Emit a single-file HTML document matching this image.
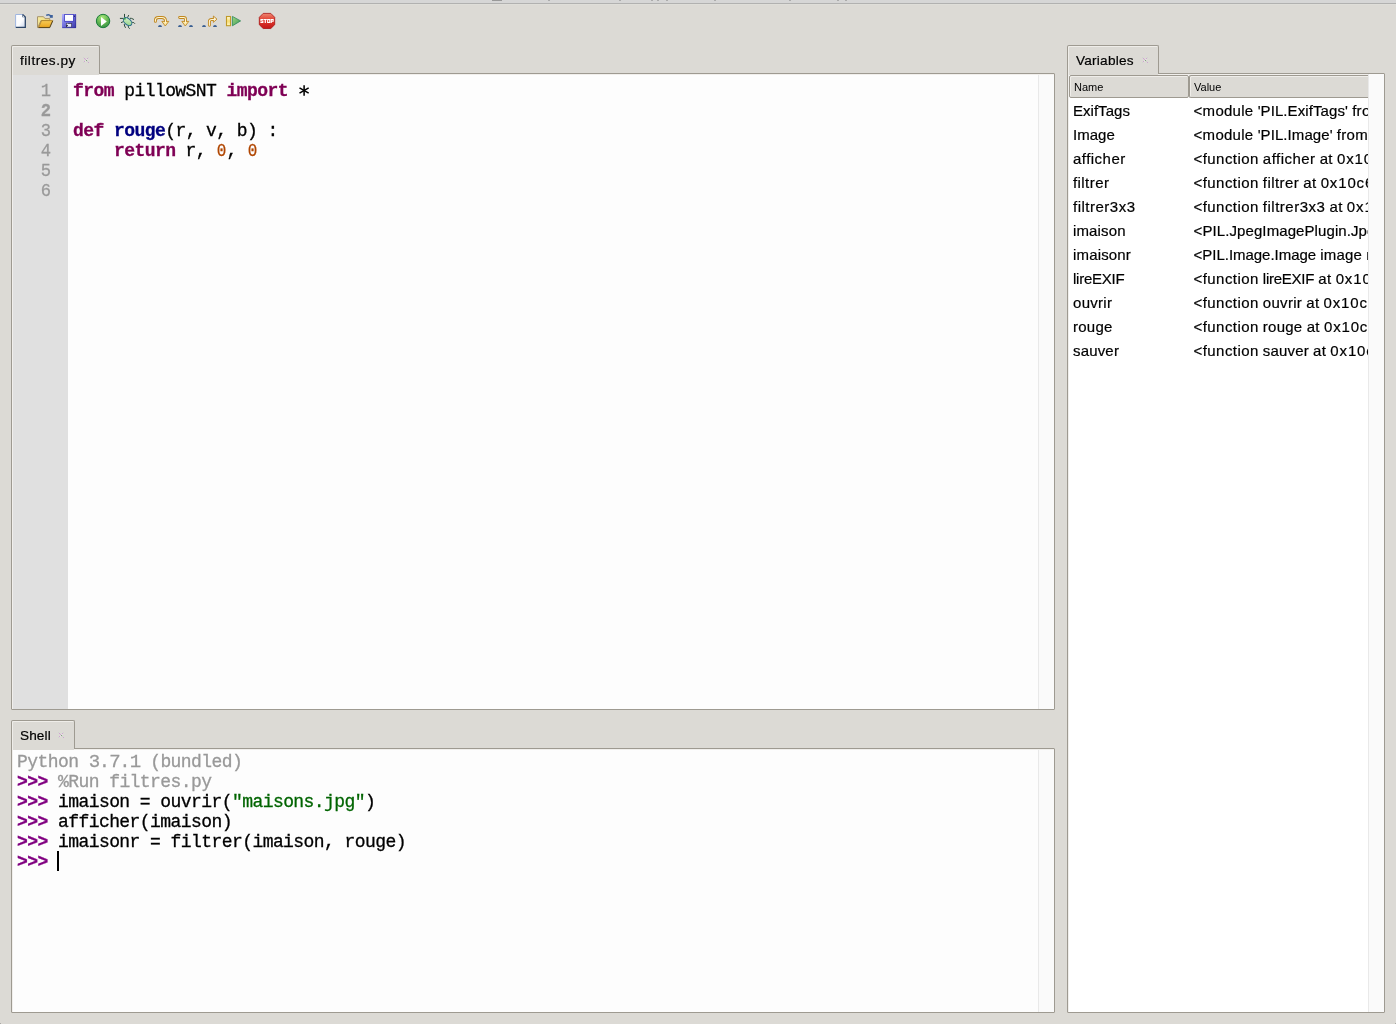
<!DOCTYPE html>
<html>
<head>
<meta charset="utf-8">
<title>Thonny</title>
<style>
*{box-sizing:border-box;margin:0;padding:0}
html,body{width:1396px;height:1024px;overflow:hidden;background:#dcdad5;}
body{position:relative;font-family:"Liberation Sans",sans-serif;color:#000;}
.abs{position:absolute}
#topstrip{left:0;top:0;width:1396px;height:3px;background:#d6d6d6}
#topline{left:0;top:3px;width:1396px;height:1px;background:#b1b1b0}
/* notebook panes */
.pane{position:absolute;border:1px solid #9e9a91;background:#dcdad5;border-radius:1px;box-shadow:inset 1px 1px 0 #f1efec}
.tab::after{content:"";position:absolute;left:0;right:0;bottom:-1px;height:1px;background:linear-gradient(to right,#efede9 1px,#dcdad5 1px)}
.tab{position:absolute;height:29px;border:1px solid #9e9a91;border-bottom:none;background:#dcdad5;border-radius:2px 2px 0 0;font-size:13.6px;line-height:15px;box-shadow:inset 1px 1px 0 #efede9}
.tab span.t{position:absolute;left:8px;top:7px;white-space:nowrap}
.tab span.x{position:absolute;top:7px;font-size:11px;color:#c9b6cf}
/* editor */
.mono{font-family:"Liberation Mono",monospace;font-size:18px;line-height:20px;white-space:pre;letter-spacing:-0.567px;-webkit-text-stroke:0.3px}
#gutter{left:13px;top:75px;width:55px;height:634px;background:#e0e0e0}
#edtext{left:68px;top:75px;width:970px;height:634px;background:#fdfdfd}
.sbline{background:#e9e9e9;width:1px}
.sb{background:#fafafa}
.ln{position:absolute;left:0;width:50px;text-align:right;color:#999;font-size:19px;letter-spacing:0;transform:scaleX(.9);transform-origin:100% 50%}
.kw{color:#7f0055;font-weight:bold}
.df{color:#00007f;font-weight:bold}
.nm{color:#b04600;font-size:19px;letter-spacing:-1.167px;display:inline-block;transform:scaleX(.84)}
.dg{font-size:19px;letter-spacing:-1.167px}
.st{color:#006400}
.pr{color:#800080;font-weight:bold}
.gr{color:#999}
.cl{position:absolute;left:5px}
/* variables */
.hd{position:absolute;top:75px;height:23px;border:1px solid #9e9a91;border-radius:2px;background:#dcdad5;font-size:11px;line-height:13px;box-shadow:inset 1px 1px 0 #efede9}
.hd span{position:absolute;left:4px;top:5px}
.vr i,.vv i{font-style:normal}
.vr,.vv{-webkit-text-stroke:0.2px}
.tab span.t{-webkit-text-stroke:0.2px}
.vr{position:absolute;left:1073px;font-size:15px;line-height:18px;white-space:nowrap}
.vv{position:absolute;left:1193.6px;font-size:15px;line-height:18px;white-space:nowrap;width:174.4px;overflow:hidden}
</style>
</head>
<body>
<div id="root" style="position:absolute;left:0;top:0;width:1396px;height:1024px;will-change:transform">
<div class="abs" id="topstrip"></div>
<div class="abs" id="topline"></div>
<div class="abs" style="left:0;top:4px;width:1396px;height:1px;background:#dfded9"></div>
<div class="abs" style="left:492px;top:0;width:10px;height:1px;background:#999"></div><div class="abs" style="left:548px;top:0;width:2px;height:1px;background:#9a9a9a;opacity:.7"></div><div class="abs" style="left:619px;top:0;width:2px;height:1px;background:#9a9a9a;opacity:.7"></div><div class="abs" style="left:651px;top:0;width:2px;height:1px;background:#9a9a9a;opacity:.7"></div><div class="abs" style="left:657px;top:0;width:2px;height:1px;background:#9a9a9a;opacity:.7"></div><div class="abs" style="left:666px;top:0;width:2px;height:1px;background:#9a9a9a;opacity:.7"></div><div class="abs" style="left:714px;top:0;width:2px;height:1px;background:#9a9a9a;opacity:.7"></div><div class="abs" style="left:789px;top:0;width:2px;height:1px;background:#9a9a9a;opacity:.7"></div><div class="abs" style="left:837px;top:0;width:2px;height:1px;background:#9a9a9a;opacity:.7"></div><div class="abs" style="left:845px;top:0;width:2px;height:1px;background:#9a9a9a;opacity:.7"></div>

<!-- TOOLBAR -->
<!--TB--><svg class="abs" style="left:0;top:0" width="300" height="40" viewBox="0 0 300 40">
<defs>
<linearGradient id="gPage" x1="0" y1="0" x2="1" y2="1"><stop offset="0" stop-color="#fff"/><stop offset=".55" stop-color="#fbfcff"/><stop offset="1" stop-color="#c4d0e8"/></linearGradient>
<linearGradient id="gFold" x1="0" y1="0" x2="0" y2="1"><stop offset="0" stop-color="#f6cc58"/><stop offset="1" stop-color="#eaa41e"/></linearGradient>
<linearGradient id="gFoldB" x1="0" y1="0" x2="1" y2="1"><stop offset="0" stop-color="#f6eea4"/><stop offset="1" stop-color="#ecca60"/></linearGradient>
<linearGradient id="gSave" x1="0" y1="0" x2="1" y2="1"><stop offset="0" stop-color="#b2b0fc"/><stop offset=".45" stop-color="#7674de"/><stop offset="1" stop-color="#3a38a6"/></linearGradient>
<radialGradient id="gRun" cx=".45" cy=".25" r=".8"><stop offset="0" stop-color="#a8e878"/><stop offset=".6" stop-color="#5cb050"/><stop offset="1" stop-color="#2f8c44"/></radialGradient>
<linearGradient id="gBug" x1="0" y1="0" x2="1" y2="1"><stop offset="0" stop-color="#e4f6dc"/><stop offset="1" stop-color="#88cc78"/></linearGradient>
<linearGradient id="gPipe" x1="0" y1="0" x2="0" y2="1"><stop offset="0" stop-color="#fff8dc"/><stop offset="1" stop-color="#f8d878"/></linearGradient>
<linearGradient id="gPause" x1="0" y1="0" x2="0" y2="1"><stop offset="0" stop-color="#fffce0"/><stop offset=".5" stop-color="#f8dc70"/><stop offset="1" stop-color="#fff8c8"/></linearGradient>
<linearGradient id="gTri" x1="0" y1="0" x2="1" y2="1"><stop offset="0" stop-color="#a0d880"/><stop offset="1" stop-color="#3c9858"/></linearGradient>
<linearGradient id="gStop" x1="0" y1="0" x2="0" y2="1"><stop offset="0" stop-color="#ee8670"/><stop offset=".45" stop-color="#e03c30"/><stop offset="1" stop-color="#c41818"/></linearGradient>
</defs>
<!-- new file -->
<g>
<path d="M15.5 14.5 H22.8 L25.5 17.2 V27.6 H15.5 Z" fill="url(#gPage)"/>
<path d="M15.6 27.4 V14.5 H22.8" fill="none" stroke="#9fb6e0" stroke-width="1"/>
<path d="M22.6 14.4 L25.3 17.1 V27.4 H15.8" fill="none" stroke="#2b4568" stroke-width="1.3"/>
<path d="M22.4 14.6 V17.3 H25.2 Z" fill="#3b5578"/><rect x="23.1" y="15.9" width=".9" height=".9" fill="#fff"/>
</g>
<!-- open folder -->
<g>
<path d="M37.5 27.5 V16.7 H43.5 L45 18.6 H49.8 V20.5 H41 L37.8 27.5 Z" fill="url(#gFoldB)" stroke="#a8946a" stroke-width="1"/>
<path d="M38.6 27.4 L41.6 20.6 H52.6 L49.6 27.4 Z" fill="url(#gFold)" stroke="#b08428" stroke-width=".9"/>
<path d="M38.4 27.6 H49.8 L52.8 20.8" fill="none" stroke="#3a2c10" stroke-width="1" opacity=".75"/>
<path d="M46.2 15.4 Q49 13.8 50.8 16" fill="none" stroke="#3c609c" stroke-width="1.3"/>
<path d="M49.8 15 H52.8 V17.8 H49.8 Z" fill="#3c609c"/>
</g>
<!-- save -->
<g>
<rect x="62" y="14" width="14" height="14" fill="url(#gSave)"/>
<path d="M62.3 27.7 H75.7 V14.3" fill="none" stroke="#2c2a98" stroke-width=".6"/>
<rect x="64.2" y="14" width="9.6" height="7.8" fill="#4a48c4"/>
<rect x="65" y="14.9" width="8" height="6" fill="#fdfdff"/>
<rect x="66" y="23.1" width="5.8" height="4" fill="#30304c"/>
<rect x="67.2" y="23.8" width="4" height="3" fill="#e4e8ff"/><rect x="66.3" y="24.8" width="1.6" height="1.2" fill="#30304c"/>
<rect x="66.6" y="23.6" width="1.2" height="1.2" fill="#fff"/>
<rect x="74" y="15.6" width="1" height="1.2" fill="#1c1c60"/>
</g>
<!-- run -->
<g>
<circle cx="103.05" cy="21" r="6.7" fill="url(#gRun)" stroke="#1c7c3c" stroke-width="1"/>
<path d="M101 16.9 V26.1 L106.8 21.4 Z" fill="#fff"/>
</g>
<!-- debug -->
<g stroke="#2c4c3c" stroke-width="1" stroke-linecap="round" fill="none">
<path d="M124.5 14.3 V17.3"/><path d="M128.6 15.4 L127.4 17.8"/>
<path d="M120.3 18.4 H123.2"/><path d="M130.3 18.3 L131.6 18.4 L133.6 19.4"/>
<path d="M121.4 22.5 L123.5 21.6"/><path d="M132.5 22.4 L133.8 22.6 L134.7 23.5"/>
<path d="M124.3 24.4 L124.6 26 L125.4 27.5"/><path d="M128.3 26.3 L128.5 27.6 L129.5 28.4"/>
<ellipse cx="127.6" cy="21.6" rx="4.9" ry="3.1" transform="rotate(42 127.6 21.6)" fill="url(#gBug)" stroke="#2a6c8c" stroke-width="1"/>
<circle cx="124.8" cy="18.8" r="1" fill="#3c9c4c" stroke="none"/>
</g>
<!-- step over -->
<g fill="none" stroke-linecap="round" stroke-linejoin="round">
<path d="M155.4 21.4 V20.4 Q155.4 17.45 158.6 17.45 H161.8 Q165.5 17.45 165.5 20.8 V22" stroke="#c08820" stroke-width="2.9"/>
<path d="M162.2 21.4 H168.8 L165.5 25.7 Z" fill="#fbe6a4" stroke="#c08820" stroke-width=".9"/>
<path d="M155.4 21.3 V20.4 Q155.4 17.45 158.6 17.45 H161.8 Q165.5 17.45 165.5 20.8 V22.6" stroke="#fff4d0" stroke-width="1.1"/>
</g>
<path d="M158 26.9 Q158.2 25 160 25 Q161.8 25 162 26.9 Z" fill="#3a5f92"/>
<!-- step into -->
<g fill="none" stroke-linecap="round" stroke-linejoin="round">
<path d="M179.6 17.45 H183.8 Q185.5 17.45 185.5 19.2 V22" stroke="#c08820" stroke-width="2.9"/>
<path d="M182.2 21.4 H188.8 L185.5 25.7 Z" fill="#fbe6a4" stroke="#c08820" stroke-width=".9"/>
<path d="M179.7 17.45 H183.8 Q185.5 17.45 185.5 19.2 V22.6" stroke="#fff4d0" stroke-width="1.1"/>
</g>
<path d="M178 26.9 Q178.2 25 180 25 Q181.8 25 182 26.9 Z" fill="#3a5f92"/>
<path d="M189 26.9 Q189.2 25 191 25 Q192.8 25 193 26.9 Z" fill="#3a5f92"/>
<!-- step out -->
<g fill="none" stroke-linecap="round" stroke-linejoin="round">
<path d="M209.4 25.3 V21.6 Q209.4 19.5 211.5 19.5 H212.4" stroke="#c08820" stroke-width="2.9"/>
<path d="M213.4 16.4 V22.3 L216.7 19.4 Z" fill="#fdf2d0" stroke="#c08820" stroke-width=".9"/>
<path d="M209.4 25.2 V21.6 Q209.4 19.5 211.5 19.5 H214" stroke="#fff4d0" stroke-width="1.1"/>
</g>
<path d="M202 26.9 Q202.2 25 204 25 Q205.8 25 206 26.9 Z" fill="#3a5f92"/>
<path d="M213 26.9 Q213.2 25 215 25 Q216.8 25 217 26.9 Z" fill="#3a5f92"/>
<!-- resume -->
<rect x="226.5" y="16.5" width="4" height="9.2" fill="url(#gPause)" stroke="#c09a28" stroke-width="1.1"/>
<path d="M232.4 16.4 V25.8 L240.6 20.9 Z" fill="url(#gTri)" stroke="#2c8858" stroke-width=".8" stroke-linejoin="round"/>
<!-- stop -->
<path d="M263.2 13.4 H270.8 L274.7 17.3 V24.7 L270.8 28.5 H263.2 L259.3 24.7 V17.3 Z" fill="url(#gStop)" stroke="#a81414" stroke-width=".8"/>
<path fill="#fff" fill-rule="evenodd" d="M263.4 19.1 H260.4 V21.4 H262.29999999999995 V21.9 H260.4 V22.9 H263.4 V20.6 H261.5 V20.1 H263.4 Z M263.8 19.1 H266.8 V20.1 H265.90000000000003 V22.9 H264.7 V20.1 H263.8 Z M267.1 19.1 H270.3 V22.9 H267.1 Z M268.20000000000005 20.1 V21.9 H269.20000000000005 V20.1 Z M270.7 19.1 H273.7 V21.7 H271.8 V22.9 H270.7 Z M271.8 20 V20.8 H272.59999999999997 V20 Z"/>
</svg>
<!--/TB-->

<!-- EDITOR NOTEBOOK -->
<div class="pane" style="left:11px;top:73px;width:1044px;height:637px"></div>
<div class="tab" style="left:11px;top:45px;width:89px"><span class="t" style="letter-spacing:.53px">filtres.py</span></div>
<div class="abs" id="gutter"></div>
<div class="abs" id="edtext"></div>
<div class="abs sbline" style="left:1038px;top:75px;height:634px"></div>
<div class="abs sb" style="left:1039px;top:75px;width:15px;height:634px"></div>
<div class="abs mono" id="lnums" style="left:1px;top:81px;width:68px">
<span class="ln" style="top:0">1</span><span class="ln" style="top:20px;font-weight:bold">2</span><span class="ln" style="top:40px">3</span><span class="ln" style="top:60px">4</span><span class="ln" style="top:80px">5</span><span class="ln" style="top:100px">6</span>
</div>
<div class="abs mono" id="code" style="left:68px;top:81px">
<span class="cl" style="top:0"><span class="kw">from</span> pillowSNT <span class="kw">import</span></span>
<span class="cl" style="top:40px"><span class="kw">def</span> <span class="df">rouge</span>(r, v, b) :</span>
<span class="cl" style="top:60px">    <span class="kw">return</span> r, <span class="nm">0</span>, <span class="nm">0</span></span>
</div>

<svg class="abs" style="left:296px;top:82px" width="16" height="16" viewBox="296 82 16 16"><g stroke="#000" stroke-width="1.55" fill="none"><path d="M304.1 85.3V95.7"/><path d="M299.5 87.9L308.7 93.1"/><path d="M308.7 87.9L299.5 93.1"/></g></svg>
<!-- SHELL NOTEBOOK -->
<div class="pane" style="left:11px;top:748px;width:1044px;height:265px"></div>
<div class="tab" style="left:11px;top:720px;width:64px"><span class="t" style="letter-spacing:.12px">Shell</span></div>
<div class="abs" style="left:13px;top:750px;width:1025px;height:262px;background:#fdfdfd"></div>
<div class="abs sbline" style="left:1038px;top:750px;height:262px"></div>
<div class="abs sb" style="left:1039px;top:750px;width:15px;height:262px"></div>
<div class="abs mono" id="shell" style="left:12px;top:752px">
<span class="cl gr" style="top:0">Python <span class="dg">3</span>.<span class="dg">7</span>.<span class="dg">1</span> (bundled)</span>
<span class="cl" style="top:20px"><span class="pr">&gt;&gt;&gt;</span> <span class="gr">%Run filtres.py</span></span>
<span class="cl" style="top:40px"><span class="pr">&gt;&gt;&gt;</span> imaison = ouvrir(<span class="st">"maisons.jpg"</span>)</span>
<span class="cl" style="top:60px"><span class="pr">&gt;&gt;&gt;</span> afficher(imaison)</span>
<span class="cl" style="top:80px"><span class="pr">&gt;&gt;&gt;</span> imaisonr = filtrer(imaison, rouge)</span>
<span class="cl" style="top:100px"><span class="pr">&gt;&gt;&gt;</span> </span>
</div>
<div class="abs" style="left:57px;top:851px;width:2px;height:20px;background:#000"></div>

<!-- VARIABLES NOTEBOOK -->
<div class="pane" style="left:1067px;top:73px;width:318px;height:940px"></div>
<div class="tab" style="left:1067px;top:45px;width:92px"><span class="t" style="letter-spacing:.24px">Variables</span></div>
<div class="abs" style="left:1069px;top:75px;width:299px;height:937px;background:#fff"></div>
<div class="abs sbline" style="left:1368px;top:74px;height:938px"></div>
<div class="abs sb" style="left:1369px;top:74px;width:15px;height:938px"></div>
<div class="hd" style="left:1069px;width:120px"><span>Name</span></div>
<div class="hd" style="left:1189px;width:182px;border-right:none;border-radius:2px 0 0 2px;clip-path:inset(0 3px 0 0)"><span>Value</span></div>
<div id="vars">
<span class="vr" style="top:102px;letter-spacing:0.03px">ExifTags</span><span class="vv" style="top:102px"><i style="letter-spacing:0.27px">&lt;module</i> <i style="letter-spacing:0.09px">'PIL.ExifTags'</i> <i style="letter-spacing:0.3px">from</i> '/Applications</span>
<span class="vr" style="top:126px;letter-spacing:0.03px">Image</span><span class="vv" style="top:126px"><i style="letter-spacing:0.27px">&lt;module</i> <i style="letter-spacing:0.08px">'PIL.Image'</i> <i style="letter-spacing:0.3px">from</i> '/Applications</span>
<span class="vr" style="top:150px;letter-spacing:0.47px">afficher</span><span class="vv" style="top:150px"><i style="letter-spacing:0.42px">&lt;function</i> <i style="letter-spacing:0.47px">afficher</i> <i style="letter-spacing:0.3px">at</i> <i style="letter-spacing:0.85px">0x10c6a8d08&gt;</i></span>
<span class="vr" style="top:174px;letter-spacing:0.43px">filtrer</span><span class="vv" style="top:174px"><i style="letter-spacing:0.42px">&lt;function</i> <i style="letter-spacing:0.43px">filtrer</i> <i style="letter-spacing:0.3px">at</i> <i style="letter-spacing:0.85px">0x10c6a8e18&gt;</i></span>
<span class="vr" style="top:198px;letter-spacing:0.5px">filtrer3x3</span><span class="vv" style="top:198px"><i style="letter-spacing:0.42px">&lt;function</i> <i style="letter-spacing:0.5px">filtrer3x3</i> <i style="letter-spacing:0.3px">at</i> <i style="letter-spacing:0.85px">0x10c6a8ea0&gt;</i></span>
<span class="vr" style="top:222px;letter-spacing:0.14px">imaison</span><span class="vv" style="top:222px"><i style="letter-spacing:0.09px">&lt;PIL.JpegImagePlugin.JpegImageFile</i> image</span>
<span class="vr" style="top:246px;letter-spacing:0.16px">imaisonr</span><span class="vv" style="top:246px"><i style="letter-spacing:-0.03px">&lt;PIL.Image.Image</i> <i style="letter-spacing:0.2px">image</i> mode=RGB size</span>
<span class="vr" style="top:270px;letter-spacing:-0.25px">lireEXIF</span><span class="vv" style="top:270px"><i style="letter-spacing:0.42px">&lt;function</i> <i style="letter-spacing:-0.25px">lireEXIF</i> <i style="letter-spacing:0.3px">at</i> <i style="letter-spacing:0.85px">0x10c6a8c80&gt;</i></span>
<span class="vr" style="top:294px;letter-spacing:0.29px">ouvrir</span><span class="vv" style="top:294px"><i style="letter-spacing:0.42px">&lt;function</i> <i style="letter-spacing:0.29px">ouvrir</i> <i style="letter-spacing:0.3px">at</i> <i style="letter-spacing:0.85px">0x10c6a8bf8&gt;</i></span>
<span class="vr" style="top:318px;letter-spacing:0.25px">rouge</span><span class="vv" style="top:318px"><i style="letter-spacing:0.42px">&lt;function</i> <i style="letter-spacing:0.25px">rouge</i> <i style="letter-spacing:0.3px">at</i> <i style="letter-spacing:0.85px">0x10c6b1048&gt;</i></span>
<span class="vr" style="top:342px;letter-spacing:0.17px">sauver</span><span class="vv" style="top:342px"><i style="letter-spacing:0.42px">&lt;function</i> <i style="letter-spacing:0.17px">sauver</i> <i style="letter-spacing:0.3px">at</i> <i style="letter-spacing:0.85px">0x10c6a8d90&gt;</i></span>
</div>
<svg class="abs" style="left:83px;top:57px" width="6" height="6" viewBox="0 0 6 6" shape-rendering="crispEdges"><rect x="0" y="0" width="1" height="1" fill="#d0d6ce"/><rect x="5" y="0" width="1" height="1" fill="#d0d6ce"/><rect x="0" y="5" width="1" height="1" fill="#d0d6ce"/><rect x="1" y="1" width="1" height="1" fill="#cfa4d3"/><rect x="4" y="1" width="1" height="1" fill="#cfa4d3"/><rect x="2" y="2" width="1" height="1" fill="#cfa4d3"/><rect x="3" y="3" width="1" height="1" fill="#7f9f80"/><rect x="1" y="4" width="1" height="1" fill="#cfa4d3"/><rect x="5" y="5" width="1" height="1" fill="#cfa4d3"/><rect x="4" y="4" width="1" height="1" fill="#ccd4cb"/><rect x="3" y="2" width="1" height="1" fill="#e3e2dd"/><rect x="2" y="3" width="1" height="1" fill="#e3e2dd"/><rect x="4" y="2" width="1" height="1" fill="#e3e2dd"/><rect x="2" y="4" width="1" height="1" fill="#e3e2dd"/></svg>
<svg class="abs" style="left:58px;top:732px" width="6" height="6" viewBox="0 0 6 6" shape-rendering="crispEdges"><rect x="0" y="0" width="1" height="1" fill="#d0d6ce"/><rect x="5" y="0" width="1" height="1" fill="#d0d6ce"/><rect x="0" y="5" width="1" height="1" fill="#d0d6ce"/><rect x="1" y="1" width="1" height="1" fill="#cfa4d3"/><rect x="4" y="1" width="1" height="1" fill="#cfa4d3"/><rect x="2" y="2" width="1" height="1" fill="#cfa4d3"/><rect x="3" y="3" width="1" height="1" fill="#7f9f80"/><rect x="1" y="4" width="1" height="1" fill="#cfa4d3"/><rect x="5" y="5" width="1" height="1" fill="#cfa4d3"/><rect x="4" y="4" width="1" height="1" fill="#ccd4cb"/><rect x="3" y="2" width="1" height="1" fill="#e3e2dd"/><rect x="2" y="3" width="1" height="1" fill="#e3e2dd"/><rect x="4" y="2" width="1" height="1" fill="#e3e2dd"/><rect x="2" y="4" width="1" height="1" fill="#e3e2dd"/></svg>
<svg class="abs" style="left:1142px;top:57px" width="6" height="6" viewBox="0 0 6 6" shape-rendering="crispEdges"><rect x="0" y="0" width="1" height="1" fill="#d0d6ce"/><rect x="5" y="0" width="1" height="1" fill="#d0d6ce"/><rect x="0" y="5" width="1" height="1" fill="#d0d6ce"/><rect x="1" y="1" width="1" height="1" fill="#cfa4d3"/><rect x="4" y="1" width="1" height="1" fill="#cfa4d3"/><rect x="2" y="2" width="1" height="1" fill="#cfa4d3"/><rect x="3" y="3" width="1" height="1" fill="#7f9f80"/><rect x="1" y="4" width="1" height="1" fill="#cfa4d3"/><rect x="5" y="5" width="1" height="1" fill="#cfa4d3"/><rect x="4" y="4" width="1" height="1" fill="#ccd4cb"/><rect x="3" y="2" width="1" height="1" fill="#e3e2dd"/><rect x="2" y="3" width="1" height="1" fill="#e3e2dd"/><rect x="4" y="2" width="1" height="1" fill="#e3e2dd"/><rect x="2" y="4" width="1" height="1" fill="#e3e2dd"/></svg>
<div class="abs" style="left:0;top:1023px;width:1px;height:1px;background:#a9a8a4"></div><div class="abs" style="left:1395px;top:1023px;width:1px;height:1px;background:#a9a8a4"></div>
</div>
</body>
</html>
